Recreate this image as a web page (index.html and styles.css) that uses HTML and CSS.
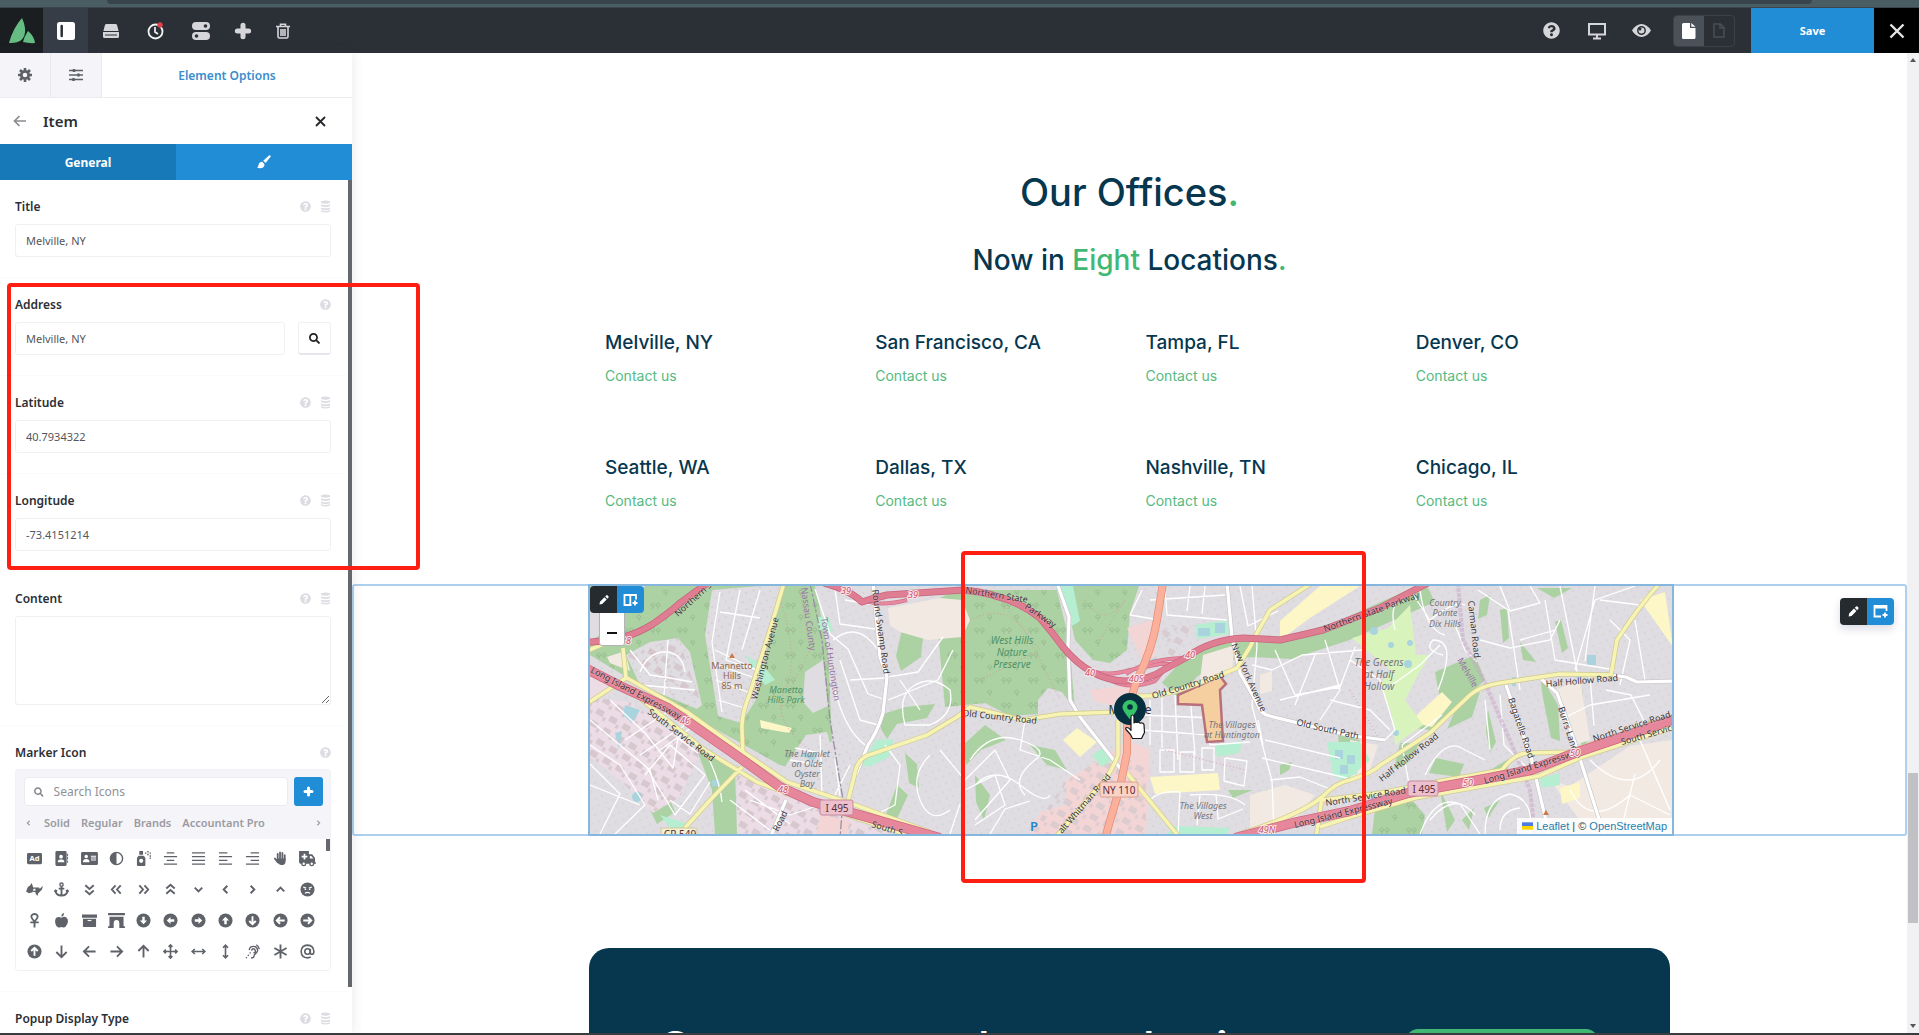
FILE: index.html
```html
<!DOCTYPE html>
<html lang="en">
<head>
<meta charset="utf-8">
<title>Live Builder – Our Offices</title>
<link rel="stylesheet" href="styles.css">
</head>
<body>
<svg class="defs" aria-hidden="true">
  <symbol id="help" viewBox="0 0 512 512"><path fill="currentColor" d="M504 256c0 136.997-111.043 248-248 248S8 392.997 8 256C8 119.083 119.043 8 256 8s248 111.083 248 248zM262.655 90c-54.497 0-89.255 22.957-116.549 63.758-3.536 5.286-2.353 12.415 2.715 16.258l34.699 26.31c5.205 3.947 12.621 3.008 16.665-2.122 17.864-22.658 30.113-35.797 57.303-35.797 20.429 0 45.698 13.148 45.698 32.958 0 14.976-12.363 22.667-32.534 33.976C247.128 238.528 216 254.941 216 296v4c0 6.627 5.373 12 12 12h56c6.627 0 12-5.373 12-12v-1.333c0-28.462 83.186-29.647 83.186-106.667 0-58.002-60.165-102-116.531-102zM256 338c-25.365 0-46 20.635-46 46 0 25.364 20.635 46 46 46s46-20.636 46-46c0-25.365-20.635-46-46-46z"/></symbol>
  <symbol id="data" viewBox="0 0 12 14"><path fill="currentColor" d="M1 1.500Q6-.8 11 1.500V3Q6 5 1 3zM1 4.500Q6 6.500 11 4.500v2Q6 8.500 1 6.500zM1 8Q6 10 11 8v2Q6 12 1 10zM1 11.200Q6 13 11 11.200v1.300Q6 14.800 1 12.500z"/></symbol>
  <symbol id="search" viewBox="0 0 512 512"><path fill="currentColor" d="M505 442.700L405.300 343c-4.500-4.500-10.600-7-17-7H372c27.600-35.300 44-79.700 44-128C416 93.100 322.900 0 208 0S0 93.100 0 208s93.100 208 208 208c48.300 0 92.700-16.400 128-44v16.300c0 6.400 2.500 12.500 7 17l99.700 99.700c9.400 9.400 24.600 9.400 33.900 0l28.300-28.300c9.400-9.400 9.400-24.600.1-34zM208 336c-70.700 0-128-57.200-128-128 0-70.700 57.200-128 128-128 70.700 0 128 57.200 128 128 0 70.700-57.200 128-128 128z"/></symbol>
  <symbol id="plus" viewBox="0 0 16 16"><path stroke="currentColor" stroke-width="4.500" stroke-linecap="round" d="M8 3v10M3 8h10"/></symbol>
  <symbol id="pen" viewBox="0 0 16 16"><path fill="currentColor" d="M2 14l.6-3.600 6-6 3 3-6 6zM9.600 3.400l1.600-1.600q.8-.6 1.600 0L14 3.200q.6.700 0 1.500l-1.500 1.700z"/></symbol>
  <symbol id="chev" viewBox="0 0 16 16"><path class="s2" d="M4 6l4 4 4-4"/></symbol>
  <symbol id="chev2" viewBox="0 0 16 16"><path class="s2" d="M3.500 3.500L8 7.500l4.500-4M3.500 9L8 13l4.500-4"/></symbol>
  <symbol id="arr" viewBox="0 0 16 16"><path class="s2" d="M8 1.500v12M2.500 8.500L8 14l5.500-5.500"/></symbol>
  <symbol id="circ" viewBox="0 0 16 16"><circle cx="8" cy="8" r="7.500" fill="currentColor"/><path class="k2" d="M8 3.500v8M4.500 8.500L8 12l3.500-3.500"/></symbol>
  <symbol id="circ2" viewBox="0 0 16 16"><circle cx="8" cy="8" r="7.500" fill="currentColor"/><path fill="#fff" d="M6.700 4h2.600v4h2.500L8 12 4.200 8h2.500z"/></symbol>
</svg>

<div class="chrome"><div class="chrome-bar"></div></div>

<header class="topbar">
  <a class="logo" href="#" aria-label="Avada"><svg width="26" height="26" viewBox="0 0 26 26"><path fill="#66bd83" d="M13 0Q4 10 0 25q7 .5 11-2 6-4 5-13-1-6-3-10zM19 13q-4 6-5 11 6 1.500 12 1-1-7-7-12z"/></svg></a>
  <button class="tool tool-on" aria-label="Toggle sidebar"><svg width="18" height="18" viewBox="0 0 18 18"><rect width="18" height="18" rx="2.500" fill="#fff"/><path stroke="#2b3036" stroke-width="2.500" stroke-linecap="round" d="M4.700 4v10"/></svg></button>
  <button class="tool" aria-label="Library"><svg width="16" height="14" viewBox="0 0 16 14"><path fill="currentColor" d="M3.500 0h9q1.200 0 1.600 1.200L15.600 7H.4l1.500-5.800Q2.300 0 3.500 0zM0 8h16v4.500q0 1.500-1.500 1.500h-13Q0 14 0 12.500z"/><path stroke="#2b3036" d="M2 11h12"/></svg></button>
  <button class="tool" aria-label="History"><svg width="18" height="18" viewBox="0 0 18 18"><circle cx="8.500" cy="9.500" r="7" fill="none" stroke="#f3f3f4" stroke-width="1.800"/><path fill="none" stroke="#f3f3f4" stroke-width="1.700" d="M8 5v5l3 2"/><circle cx="13" cy="3" r="2.700" fill="#e2414a"/></svg></button>
  <button class="tool" aria-label="Preferences"><svg width="18" height="18" viewBox="0 0 18 18"><rect width="18" height="8" rx="4" fill="currentColor"/><rect y="10" width="18" height="8" rx="4" fill="currentColor"/><circle cx="13.500" cy="4" r="1.800" fill="#2b3036"/><circle cx="4.500" cy="14" r="1.800" fill="#2b3036"/></svg></button>
  <button class="tool" aria-label="Add"><svg width="18" height="18"><use href="#plus"/></svg></button>
  <button class="tool" aria-label="Delete"><svg width="14" height="16" viewBox="0 0 14 16"><path fill="none" stroke="currentColor" stroke-width="1.600" d="M0 3.500h14M4.500 3V1.200h5V3M2 4v9.500Q2 15 3.500 15h7q1.500 0 1.500-1.500V4M5 6v7M7 6v7M9 6v7"/></svg></button>
  <div class="spacer"></div>
  <button class="tool" aria-label="Help"><svg width="17" height="17"><use href="#help"/></svg></button>
  <button class="tool" aria-label="Responsive"><svg width="20" height="18" viewBox="0 0 20 18"><path fill="none" stroke="currentColor" stroke-width="2" d="M2 2h16v10.500H2zM6 16.500h8M10 13v3"/></svg></button>
  <button class="tool" aria-label="Preview"><svg width="19" height="13" viewBox="0 0 19 13"><path fill="currentColor" d="M0 6.500Q4 0 9.500 0T19 6.500Q15 13 9.500 13T0 6.500z"/><circle cx="9.500" cy="6.500" r="3.700" fill="none" stroke="#2b3036" stroke-width="1.500"/><circle cx="8" cy="5" r="1.500" fill="#2b3036"/></svg></button>
  <div class="pages">
    <button class="page page-on" aria-label="Published"><svg width="14" height="16" viewBox="0 0 14 16"><path fill="#fff" d="M1.500 0H8v5h5.500v9.500q0 1.500-1.500 1.500H1.500Q0 16 0 14.500v-13Q0 0 1.500 0zM9.300 0l4.200 3.700H9.300z"/></svg></button>
    <button class="page" aria-label="Draft"><svg width="12" height="15" viewBox="0 0 12 15"><path fill="none" stroke="#484e56" stroke-width="1.500" d="M1 1h6.500L11 4.500V14H1zM7 1v4h4"/></svg></button>
  </div>
  <button class="save">Save</button>
  <button class="exit" aria-label="Close"><svg width="16" height="16" viewBox="0 0 16 16"><path stroke="#e6e6e8" stroke-width="2.400" d="M1.500 1.500l13 13M14.500 1.500l-13 13"/></svg></button>
</header>

<div class="workspace">
  <aside class="sidebar">
    <nav class="tabs">
      <button class="tab" aria-label="Settings"><svg width="14" height="14" viewBox="0 0 14 14"><circle cx="7" cy="7" r="3.700" fill="none" stroke="currentColor" stroke-width="2.800"/><path stroke="currentColor" stroke-width="2.600" d="M7 0v2.500M7 11.500V14M0 7h2.500M11.500 7H14M2 2l2 2M10 10l2 2M2 12l2-2M10 4l2-2"/></svg></button>
      <button class="tab" aria-label="Navigator"><svg width="14" height="12" viewBox="0 0 14 12"><path fill="none" stroke="currentColor" stroke-width="1.500" d="M0 1.500h14M0 6h14M0 10.500h14"/><path stroke="currentColor" stroke-width="2.500" d="M5 0v3M9.500 4.500v3M4.500 9v3"/></svg></button>
      <button class="tab tab-main">Element Options</button>
    </nav>
    <div class="head">
      <button class="plain" aria-label="Back"><svg width="13" height="12" viewBox="0 0 13 12"><path fill="none" stroke="#8b8b90" stroke-width="1.700" d="M13 6H1.500M6.500 1l-5 5 5 5"/></svg></button>
      <h1>Item</h1>
      <button class="plain" aria-label="Close panel"><svg width="11" height="11" viewBox="0 0 11 11"><path stroke="#25282c" stroke-width="1.800" d="M1 1l9 9M10 1l-9 9"/></svg></button>
    </div>
    <div class="modes">
      <button class="mode mode-on">General</button>
      <button class="mode" aria-label="Design"><svg width="14" height="14" viewBox="0 0 14 14"><path fill="#fff" d="M12 .4q1.300-.6 1.700.5.100.6-.3 1.100L8.600 8 6.200 5.700zM5.200 6.800l2.200 2.200q.3 4.300-4.400 4.300Q1 13.300 0 12.300q1.400-.5 1.600-2.500.3-2.600 3.600-3z"/></svg></button>
    </div>
    <div class="fields-wrap">
      <div class="fields">
        <section class="field"><div class="label"><label for="title">Title</label><svg class="i-help"><use href="#help"/></svg><svg class="i-data"><use href="#data"/></svg></div><input id="title" type="text" value="Melville, NY"></section>
        <section class="field"><div class="label"><label for="address">Address</label><svg class="i-help"><use href="#help"/></svg></div><div class="combo"><input id="address" type="text" value="Melville, NY"><button class="find" aria-label="Find address"><svg width="11" height="11"><use href="#search"/></svg></button></div></section>
        <section class="field"><div class="label"><label for="lat">Latitude</label><svg class="i-help"><use href="#help"/></svg><svg class="i-data"><use href="#data"/></svg></div><input id="lat" type="text" value="40.7934322"></section>
        <section class="field"><div class="label"><label for="lng">Longitude</label><svg class="i-help"><use href="#help"/></svg><svg class="i-data"><use href="#data"/></svg></div><input id="lng" type="text" value="-73.4151214"></section>
        <section class="field"><div class="label"><label for="content">Content</label><svg class="i-help"><use href="#help"/></svg><svg class="i-data"><use href="#data"/></svg></div><textarea id="content"></textarea></section>
        <section class="field">
          <div class="label"><label for="icons">Marker Icon</label><svg class="i-help"><use href="#help"/></svg></div>
          <div class="picker">
            <div class="picker-head">
              <div class="picker-row">
                <div class="searchbox"><svg width="10" height="10"><use href="#search"/></svg><input id="icons" type="text" placeholder="Search Icons"></div>
                <button class="add" aria-label="Add icon"><svg width="11" height="11"><use href="#plus"/></svg></button>
              </div>
              <div class="sets">
                <button class="plain" aria-label="Previous"><svg class="r90" width="14" height="14"><use href="#chev"/></svg></button>
                <button class="set">Solid</button><button class="set">Regular</button><button class="set">Brands</button><button class="set">Accountant Pro</button>
                <button class="plain last" aria-label="Next"><svg class="r270" width="14" height="14"><use href="#chev"/></svg></button>
              </div>
            </div>
            <div class="icons">
              <svg viewBox="0 0 16 16"><rect y="2" width="16" height="12" rx="1.500" fill="currentColor"/><text class="ad" x="8" y="11">Ad</text></svg>
              <svg viewBox="0 0 16 16"><path fill="currentColor" d="M3 0h9q1.500 0 1.500 1.500v13Q13.500 16 12 16H3q-1.500 0-1.500-1.500v-13Q1.500 0 3 0zM14 3h1v2.500h-1zM14 6.500h1V9h-1zM14 10h1v2.500h-1z"/><path fill="#fff" d="M7.500 4a2 2 0 0 1 0 4 2 2 0 0 1 0-4zM4 12q0-3 2.500-3h2Q11 9 11 12z"/></svg>
              <svg viewBox="0 0 16 16"><rect x="-1" y="1" width="18" height="14" rx="1.500" fill="currentColor"/><path fill="#fff" d="M4.500 4a1.900 1.900 0 0 1 0 3.800 1.900 1.900 0 0 1 0-3.800zM1 12q0-3.500 3.500-3.500T8 12zM9.500 5H15v1H9.500zM9.500 7H15v1H9.500zM9.500 9H15v1H9.500z"/></svg>
              <svg viewBox="0 0 16 16"><circle cx="8" cy="8" r="6.500" fill="none" stroke="currentColor" stroke-width="1.500"/><path fill="currentColor" d="M8 1.500v13a6.500 6.500 0 0 1 0-13z"/></svg>
              <svg viewBox="0 0 16 16"><path fill="currentColor" d="M3.500 0h4v4h-4zM3 5h5q2 1 2 3v7q0 1-1 1H2q-1 0-1-1V8q0-2 2-3zM9.500 1.500H11V3H9.500zM12 0h1.500v1.500H12zM14.500 1.500H16V3h-1.500zM12 3h1.500v1.500H12zM14.500 4.500H16V6h-1.500zM14.500 7H16v1.300h-1.500z"/><circle cx="5.500" cy="10.500" r="2.200" fill="#fff"/></svg>
              <svg viewBox="0 0 16 16"><path class="s15" d="M4 2h8M1 6h14M4 10h8M1 14h14"/></svg>
              <svg viewBox="0 0 16 16"><path class="s15" d="M1 2h14M1 6h14M1 10h14M1 14h14"/></svg>
              <svg viewBox="0 0 16 16"><path class="s15" d="M1 2h9M1 6h14M1 10h9M1 14h14"/></svg>
              <svg viewBox="0 0 16 16"><path class="s15" d="M6 2h9M1 6h14M6 10h9M1 14h14"/></svg>
              <svg viewBox="0 0 16 16"><path stroke="currentColor" stroke-width="1.900" stroke-linecap="round" d="M5 9V3M7.500 8V1.500M10 8V2M12.500 9V4.500M2 8l3 4"/><path fill="currentColor" d="M4 8h9.500v2q0 5-4.500 5-3 0-5-4z"/></svg>
              <svg viewBox="0 0 16 16"><path fill="currentColor" d="M-1 0h10.500v3.500H13l3 4V12h1v1.500H0L-1 12z"/><circle cx="4" cy="13.500" r="2" fill="#fff" stroke="currentColor" stroke-width="1.400"/><circle cx="12.500" cy="13.500" r="2" fill="#fff" stroke="currentColor" stroke-width="1.400"/><path stroke="#fff" stroke-width="1.800" d="M4.800 3v6M1.800 6h6"/><path fill="#fff" d="M10.500 5.300h1.500L14.300 8h-3.800z"/></svg>

              <svg viewBox="0 0 16 16"><path fill="currentColor" d="M-1 10l2-5 2-1 2-3 2 6-1 4-4 1zM9 6l5 1 3-3-1 4-4 4-1 3-2-3z"/><path fill="none" stroke="currentColor" stroke-width="1.500" d="M6 6.500h7M6.500 10h7"/></svg>
              <svg viewBox="0 0 16 16"><path class="s2" d="M8 5v9.500M5 7h6M1.500 9q.5 5.500 6.500 5.500T14.500 9M.5 10.500L1.700 9l1.600 1M15.500 10.500L14.300 9l-1.600 1"/><circle cx="8" cy="2.800" r="1.700" class="s15"/></svg>
              <svg viewBox="0 0 16 16"><use href="#chev2"/></svg>
              <svg class="r90" viewBox="0 0 16 16"><use href="#chev2"/></svg>
              <svg class="r270" viewBox="0 0 16 16"><use href="#chev2"/></svg>
              <svg class="r180" viewBox="0 0 16 16"><use href="#chev2"/></svg>
              <svg viewBox="0 0 16 16"><use href="#chev"/></svg>
              <svg class="r90" viewBox="0 0 16 16"><use href="#chev"/></svg>
              <svg class="r270" viewBox="0 0 16 16"><use href="#chev"/></svg>
              <svg class="r180" viewBox="0 0 16 16"><use href="#chev"/></svg>
              <svg viewBox="0 0 16 16"><circle cx="8" cy="8" r="7.500" fill="currentColor"/><path fill="none" stroke="#fff" stroke-width="1.300" d="M3.500 5.500l3 1M12.500 5.500l-3 1M5.300 12q2.700-2 5.400 0M5 8h1.500M9.500 8H11"/></svg>

              <svg viewBox="0 0 16 16"><path class="s2" d="M8 8v7.500M3.500 10h9M8 9Q3.500 4.500 5 2.500 6 1 8 1t3 1.500Q12.500 4.500 8 9z"/></svg>
              <svg viewBox="0 0 16 16"><path fill="currentColor" d="M8 5q3-2 5.500 0Q16 8 14 12t-4 3.500q-2-1-4 0Q3 16 1.500 11.500.5 7 2.500 5 5 3.500 8 5zM8 4Q7.500 1 10.500 0 11 3.500 8 4z"/></svg>
              <svg viewBox="0 0 16 16"><path fill="currentColor" d="M0 1.500h16V5H0zM1 6h14v8q0 1-1 1H2q-1 0-1-1z"/><path stroke="#fff" stroke-width="1.200" d="M6 8h4"/></svg>
              <svg viewBox="0 0 16 16"><path fill="currentColor" d="M-1 0h18v2.500H-1zM.5 4h15v10H17v2h-6v-5q0-3.500-3-3.500T5 11v5h-6v-2H.5z"/></svg>
              <svg viewBox="0 0 16 16"><use href="#circ2"/></svg>
              <svg class="r90" viewBox="0 0 16 16"><use href="#circ2"/></svg>
              <svg class="r270" viewBox="0 0 16 16"><use href="#circ2"/></svg>
              <svg class="r180" viewBox="0 0 16 16"><use href="#circ2"/></svg>
              <svg viewBox="0 0 16 16"><use href="#circ"/></svg>
              <svg class="r90" viewBox="0 0 16 16"><use href="#circ"/></svg>
              <svg class="r270" viewBox="0 0 16 16"><use href="#circ"/></svg>

              <svg class="r180" viewBox="0 0 16 16"><use href="#circ"/></svg>
              <svg viewBox="0 0 16 16"><use href="#arr"/></svg>
              <svg class="r90" viewBox="0 0 16 16"><use href="#arr"/></svg>
              <svg class="r270" viewBox="0 0 16 16"><use href="#arr"/></svg>
              <svg class="r180" viewBox="0 0 16 16"><use href="#arr"/></svg>
              <svg viewBox="0 0 16 16"><path class="s17" d="M8 1.500v13M1.500 8h13M6 3l2-2 2 2M6 13l2 2 2-2M3 6L1 8l2 2M13 6l2 2-2 2"/></svg>
              <svg viewBox="0 0 16 16"><path class="s17" d="M1.500 8h13M4 5.300L1.200 8 4 10.700M12 5.300L14.800 8 12 10.700"/></svg>
              <svg viewBox="0 0 16 16"><path class="s17" d="M8 1.500v13M5.300 4L8 1.200 10.700 4M5.300 12L8 14.800l2.700-2.800"/></svg>
              <svg viewBox="0 0 16 16"><path class="s15" d="M4.500 6.500Q5 2.500 9 2.500t4.500 4q0 2-2 3.500T9.500 13t-3 2M7 7q.5-2 2-2t2 2-2 2.500M1 15l1-1M3 12.500l1-1M5 10l1-1M12 .8q3 1.700 3.300 4.700"/></svg>
              <svg viewBox="0 0 16 16"><path class="s2" d="M8 .5v15M1.500 4.300l13 7.400M14.500 4.300l-13 7.400"/></svg>
              <svg viewBox="0 0 16 16"><path class="s17" d="M11 5v4q0 2 1.800 2Q14.800 11 14.800 8 14.500 1.500 8 1.200 1.500 1.500 1.200 8q.3 6.500 6.800 6.800 2 0 3.500-1"/><circle class="s17" cx="8" cy="8" r="2.900"/></svg>
            </div>
            <div class="picker-thumb"></div>
          </div>
        </section>
        <section class="field"><div class="label"><span class="label-text">Popup Display Type</span><svg class="i-help"><use href="#help"/></svg><svg class="i-data"><use href="#data"/></svg></div></section>
      </div>
      <div class="side-thumb"></div>
    </div>
  </aside>

  <main class="canvas">
    <section class="offices">
      <h2>Our Offices<b>.</b></h2>
      <h3>Now in <b>Eight</b> Locations<b>.</b></h3>
      <div class="grid">
        <div class="office"><h4>Melville, NY</h4><a href="#">Contact us</a></div>
        <div class="office"><h4>San Francisco, CA</h4><a href="#">Contact us</a></div>
        <div class="office"><h4>Tampa, FL</h4><a href="#">Contact us</a></div>
        <div class="office"><h4>Denver, CO</h4><a href="#">Contact us</a></div>
        <div class="office"><h4>Seattle, WA</h4><a href="#">Contact us</a></div>
        <div class="office"><h4>Dallas, TX</h4><a href="#">Contact us</a></div>
        <div class="office"><h4>Nashville, TN</h4><a href="#">Contact us</a></div>
        <div class="office"><h4>Chicago, IL</h4><a href="#">Contact us</a></div>
      </div>
    </section>

    <section class="map-row">
      <div class="row-tools"><button class="rt" aria-label="Edit container"><svg width="13" height="13"><use href="#pen"/></svg></button><button class="rt rt-blue" aria-label="Add container"><svg width="15" height="15" viewBox="0 0 15 15"><path fill="none" stroke="#fff" stroke-width="1.800" d="M8 12.500H1.500V2h12v5M1.500 3.500h12M12 8.500v5M9.500 11h5"/></svg></button></div>
      <div class="map">
        <svg class="tiles" viewBox="590 586 1082 248" preserveAspectRatio="xMidYMid slice">
          <defs>
            <pattern id="houses" width="11" height="10" patternUnits="userSpaceOnUse" patternTransform="rotate(20)"><rect x="1" y="1" width="2" height="2" fill="#cbc8cb"/><rect x="7" y="6" width="2" height="2" fill="#d0cccf"/></pattern>
            <pattern id="trees" width="27" height="25" patternUnits="userSpaceOnUse"><path fill="none" stroke="#93b98b" stroke-width=".8" d="M5 9V6M3 6a2 2 0 1 1 3.500 0zM10 9V6M8.500 6a2 2 0 1 1 3.500 0zM18 21v-3M16 18a2 2 0 1 1 3.500 0z"/></pattern>
            <pattern id="plants" width="15" height="13" patternUnits="userSpaceOnUse" patternTransform="rotate(30)"><rect x="2" y="2" width="8" height="6" fill="#d6c8cd"/><rect x="11" y="7" width="3" height="4" fill="#d8cbd0"/></pattern>
            <g id="lie"><path d="M585 668L620 686 668 708 740 758 780 787 813 802 863 816 940 838M1235 838L1293 823 1350 811 1408 793 1484 779 1531 770 1575 753 1675 719"/></g>
            <g id="nsp"><path d="M585 642Q625 642 653 624 673 610 680 603L709 582M824 583Q850 590 862 602 874 598 887 595L963 590Q1010 594 1040 618 1052 632 1063 647 1090 680 1125 681 1150 680 1165 669L1187 657Q1210 640 1243 638L1280 640 1323 630 1380 608 1428 583"/></g>
            <g id="ramps"><path d="M862 600Q880 607 907 600M1083 668Q1105 678 1130 670L1160 664 1172 664M1112 681Q1130 690 1155 681L1168 665M1126 674Q1150 658 1187 658"/></g>
            <g id="yellow"><path d="M623 648L626 678 585 705M585 652L603 644M630 690L703 749 757 782 820 806 905 834M627 678L687 712 743 752 787 782 847 802 930 832M742 767L713 797 683 830 678 838M784 583L770 630 750 693Q741 715 742 730L743 757M847 805L855 773Q858 757 872 754L927 735 957 717 970 707 1023 720 1060 714 1117 712M1137 696Q1160 697 1180 690L1213 678 1237 668 1250 647 1257 633 1270 610 1312 583M1118 720L1118 755Q1110 777 1093 793L1055 838M1127 773L1180 838M1240 834Q1300 815 1322 797 1337 782 1350 780 1374 772 1379 766L1430 733 1470 695Q1480 686 1500 683L1560 674 1611 675 1617 640Q1640 605 1660 583M1322 797L1316 838M1322 800L1380 793 1441 781 1502 770Q1515 752 1531 753L1568 752 1675 716M1320 827L1350 817 1415 798 1539 776 1582 757 1675 727"/></g>
            <g id="white"><path d="M873 583L880 657 887 677 883 713Q877 733 868 745L856 775M1057 583L1069 617 1068 647 1070 700 1080 717 1127 777M1227 583L1232 637 1240 673 1257 703Q1260 714 1270 716L1347 735 1385 740M1611 675L1626 677 1637 682 1675 681M1539 677L1557 693 1575 743 1605 838M786 800L770 838M1506 685L1531 757 1550 838"/></g>
          </defs>
          <rect x="590" y="586" width="1082" height="248" fill="#dfdde1"/>
          <rect x="590" y="586" width="1082" height="248" fill="url(#houses)" opacity=".4"/>
          <!-- woods and parks -->
          <g fill="#acd1a2">
            <path d="M590 586H815L828 650 832 740 807 772 780 765 690 715 590 655z"/>
            <path d="M935 600L957 590H1057L1069 640 1075 710 1062 692 1048 688 1038 700V714L1010 716 985 703 945 707zM1062 583H1140L1130 613 1127 650 1110 663 1093 660 1075 640zM695 745L735 770 737 834H715L712 790zM1375 810L1410 798 1425 815 1422 834H1372zM1435 672L1475 655 1485 680 1430 730 1415 728 1440 700zM1400 743h20l-14 22-12 4zM1460 700l20-8-8 25-25 12zM1488 710l8 32-6 10-4-20zM1436 758l28 6-5 13-30-4zM1280 765l12-3-3 8-9 5zM1265 790h15l-8 12zM1338 735l22 5-10 20-8 22z"/>
            <path d="M903 625l20 12-2 20-20 14-5-15zM880 715l25-8 30-3-8 14-30 6-10 15-6-10zM905 753l4 30 10 5-2-24zM897 785l-15 40h12l14-30zM645 800l22-8 8 20-18 12zM985 725l-22 20 3 20 15-15 25-10zM1030 745l25 5 12 20-20-5zM975 775l15 20-6 25-8-18zM1480 600l10-5-3 20-9 4zM1500 610l7-2 2 30-6 5zM1555 622l6-2 7 28-6 5zM1520 642l10 12 6 8-13-2zM1537 588h35l-18 10zM1540 675l18 30 2 36-9-3-8-40zM1582 688l5 60-6 2zM1648 720l8 4-2 10-8-6zM1515 755l-8 14-40 22 5-10zM1440 790l15 30-8 12zM1462 820l12-12-5 22zM1500 800l-12 18-4-10zM1660 755l10 15-6 6zM1228 790h25l-20 8z"/>
          </g>
          <path fill="none" stroke="#acd1a2" stroke-width="22" d="M1170 690L1190 668Q1220 648 1250 646L1290 648 1345 630 1430 592"/>
          <g fill="url(#trees)"><path d="M590 586H815L828 650 832 740 807 772 780 765 690 715 590 655zM935 600L957 590H1057L1069 640 1075 710 1062 692 1048 688 1038 700V714L1010 716 985 703 945 707zM1062 583H1140L1127 650 1110 663 1093 660zM1375 810L1410 798 1425 815 1422 834H1372z"/></g>
          <!-- residential blocks -->
          <g fill="#dfdde1"><path d="M712 590L783 584 768 645 756 700 741 723 718 716 705 635zM590 600l25-14h30l-30 40-25 15zM626 655L650 642 678 638 690 652 702 705 697 709 640 685zM805 672L823 660 828 706 813 713 803 702zM786 765L806 735 827 732 834 757H853L847 792 815 796 787 775z"/><path fill="url(#houses)" opacity=".6" d="M712 590L783 584 768 645 756 700 741 723 718 716 705 635zM626 655L678 638 690 652 702 705 697 709 640 685zM786 765L827 732 853 757 847 792 815 796z"/></g>
          <!-- commercial and industrial land -->
          <g fill="#ebdce6"><path d="M590 697L630 702 700 752 680 797 653 813 623 783 590 757zM737 775L820 808 890 834H737zM590 665l30 18-10 10-20 6z"/></g>
          <path fill="url(#plants)" d="M590 697L630 702 700 752 680 797 653 813 623 783 590 757zM737 775L820 808 890 834H737zM626 655L678 638 700 700z"/>
          <g fill="#f4d5d5"><path d="M1066 780L1105 757 1128 740 1150 750 1146 834H1030L1040 812 1065 805zM1127 628l30-10-3 50-12-8zM1090 690l40-5-5 22-30-5zM820 815l30 5-3 14h-30z"/></g>
          <path fill="url(#plants)" d="M1066 780L1105 757 1146 760V834H1030zM1160 625h35l-25 35z" opacity=".8"/>
          <g fill="#f2eae2"><path d="M888 608L940 598 962 600 970 620 962 637 928 640 900 632 890 625zM1203 655L1235 645 1232 670 1200 680zM1250 795l35-10 30 10-20 25-45 15zM1260 675l12-4v20l-12 3zM1350 740l28 5-10 30-18 4zM1555 690l25-10 10 60-15 5-12-35zM1550 780l20 6 60-40 42-6V834H1590zM607 657l18-6 5 20-20-8z"/></g>
          <g fill="#fdf6c6"><path d="M1077 728L1097 742 1080 757 1063 740zM1150 777L1218 773 1220 790 1155 794zM1420 712l22-20 10 10-20 25-22-5zM1280 640l30-22 50-32h-40l-40 35zM1560 788l20-6v16l-18 6zM760 720l32 8-3 5-28-5zM1640 600l25-8 8 55z"/></g>
          <path fill="#d9f3bd" d="M1352 638L1388 628 1410 605 1416 655 1430 655 1418 675 1405 700 1423 725 1395 745 1392 715 1380 685 1390 670z"/>
          <path fill="#b5eed0" d="M1195 625L1228 620 1229 634 1197 639zM817 617h12l4 15-14-2zM745 655l18 10 12 15-10 5zM1327 742L1360 742 1370 760 1345 782 1333 775zM1092 755l12 -8 10 12-12 8zM860 765l16-25 18-1-5 18-20 10zM660 815l25 8v11h-10zM1215 745l28-4-4 12-22 4zM1055 586h18l7 35-8 5zM1175 826l55 2-3 6h-60zM1540 778l20-5v12l-19 3zM1350 742l10 10-3 22-8 2z"/>
          <g fill="#a9d4de"><path d="M1198 628h12v8h-12zM1215 623h10v10h-10zM1335 750h8v9h-8zM1347 755h8v9h-8zM1340 765h8v9h-8zM1587 655h9v10h-9zM1512 677h4v9h-4zM712 780h8v6h-8zM625 705l15 5-8 13-9-8zM615 733l7-2-3 18zM800 755l18-3-4 9zM1150 665a5 5 0 1 1 8 2z"/><circle cx="1374" cy="631" r="4"/><circle cx="1391" cy="645" r="3"/><circle cx="1410" cy="643" r="3"/><circle cx="1408" cy="664" r="4"/><circle cx="1396" cy="733" r="3"/><circle cx="637" cy="797" r="5"/></g>
          <!-- minor streets -->
          <g class="minor">
            <path d="M720 592l-8 50 10 70M740 590l-14 70 30 10M760 590l-18 60M720 612l40 6M715 650l42 20M718 665l34 12M716 680l32 12M718 700l26 8M630 650l20 25 20 3 22 4M640 672q8-20 25-20t20 20M640 685l55 5M668 640l-4 55M590 720l60 50 8 30M610 700l35 33 28 35 5-30 20 15M625 740l45-30M640 755l45-30M590 745l30 20 25 40-30 29M600 834l20-40-30-30M645 765l30 50 30-40-35-30-25 30M590 785l50 20M660 750l35-25M708 757q12 25 14 45M670 800l20 14 20-32"/>
            <path d="M815 589l15 45 18 15 20 45 15 5M835 589l5 35 35 5M845 600l30 5M833 640q25-20 45 10M840 660l20 60 18 5M835 690q10 40 30 55M850 680l35-2M888 677l30-5 25-35M888 700l50-20 15-30M905 725q-8-30 10-40t35 5q5 25-20 35zM900 680l20 30M885 745l15 20-5 40-20 10M930 755q-20 20-10 45t30 10M940 750l25 30 30-30 15 30-35 40M950 834l10-30M745 790l45 34M750 800l40 15 45-15M790 760l30 5M795 748l25 5M820 735l2 60M835 758l5 38M850 765l-15 30M730 800l45 34"/>
            <path d="M1142 590l-12 25 30 5M1150 600l75-5M1165 590l2 25 60 5M1190 586l-3 25M1205 586l-3 28M1240 586l8 40 30-15M1140 715l75 3M1150 700v45M1162 698v50M1175 695l3 65M1190 695l5 60M1205 715l5 30 40-3M1140 730l70 5M1160 750h14v22h-14zM1180 752h14v20h-14zM1202 748h12v22h-12zM1225 758l22 3-3 25-20-5zM1150 800q10-10 30-8l-2 42M1190 795q40-3 55 10M1200 795l-3 30M1216 794l2 25 25-10M1252 586l5 60-5 60 20 75 2 50M1265 740l75 18M1262 758l85 20M1258 720l5 25M1270 780l30-3 30 12M1252 665l20 5 30-15 60-5M1275 650l20 45 45-8 15-40M1280 700l60-15M1295 705l20-50M1325 640l15 50-20 30M1350 660l30 20 15 50-10 10M1330 700l40 10 20 20"/>
            <path d="M970 760q20-30 50-20t15 20q-25 20-10 35M975 785q20-20 45 0t30 10M1025 720l-5 30 30 10 30 20M965 790l30-15 10 30-30 20M990 834l15-25 25-8"/>
            <path d="M1395 630q-8-30 15-40l20 30q25-20 35-15M1420 590q5 40 25 45M1443 655q-20-5-10-15 25 0 5 50M1455 625l10 25 12 12M1385 690l35-25 20-20M1480 640l30 8 40-8 10-20M1478 590l30 20 12 80M1500 586l10 25 30-8-10-17M1545 600l10 60 60 10M1520 640l35-10M1560 586l18 90M1575 670l20-70 40-14M1595 586l-10 75M1600 600l40 5M1610 620l20 20-10 45M1635 620l10 60M1560 720l30-15 60-10M1590 676l4 50M1606 690l25 5 15 30M1485 700l5 50M1500 695l4 50 30 30M1410 790l-8-45 40-30M1425 775q20-40 40-25l20 10M1420 834q15-40 40-30l20 30M1430 820q25-30 45-5M1485 834q0-35 25-40 25 5 20 40M1500 830q0-20 20-22M1570 790q20 40 60 5l40 20M1590 760q40 40 70 0M1620 834l15-60M1640 740l30 70"/>
          </g>
          <path fill="none" stroke="#dc8c9c" stroke-width=".8" stroke-dasharray="1 2.500" d="M780 600q20 60 5 90t25 60M800 590l10 60-30 60M970 620q40-20 60 20t30 60M1000 600l40 50-60 30M1085 600q20 30 40 0M1100 640l25-40M650 650l30 60M1165 750l80 20M1350 690l30 50"/>
          <!-- villages boundary -->
          <path fill="#f6cfa0" stroke="#b8707c" stroke-width="2.500" d="M1178 695L1220 676 1226 684 1220 690 1223 741 1207 742 1202 705 1178 704z"/>
          <path fill="none" stroke="#9c8da2" stroke-width="1.300" stroke-dasharray="9 2 3 2" d="M810 583L822 640 830 720 843 800 840 838"/>
          <path fill="none" stroke="#c9a8cc" stroke-width="4" stroke-dasharray="4 1" opacity=".55" d="M1458 583L1463 640 1485 683 1512 745 1530 790 1535 834"/>
          <!-- main roads: casing then fill -->
          <use href="#white" class="case" stroke-width="4.500" stroke="#c9c6c9"/><use href="#white" class="case" stroke-width="3.200" stroke="#fff"/>
          <use href="#yellow" class="case" stroke-width="5" stroke="#cfc98f"/><use href="#yellow" class="case" stroke-width="3.600" stroke="#f6f3b3"/>
          <use href="#ramps" class="case" stroke-width="4" stroke="#d4708a"/><use href="#ramps" class="case" stroke-width="2.500" stroke="#e68a9f"/>
          <use href="#nsp" class="case" stroke-width="7" stroke="#c8647d"/><use href="#nsp" class="case" stroke-width="5.500" stroke="#df7d93"/>
          <use href="#lie" class="case" stroke-width="10" stroke="#cf6880"/><use href="#lie" class="case" stroke-width="8.500" stroke="#e6879b"/>
          <g class="case"><path stroke="#e38d78" stroke-width="8" d="M1163 583L1157 620Q1152 650 1137 680L1127 710 1127 753 1120 787 1105 838"/><path stroke="#fbb09c" stroke-width="6.500" d="M1163 583L1157 620Q1152 650 1137 680L1127 710 1127 753 1120 787 1105 838"/></g>
          <!-- road names -->
          <g class="rd">
            <text transform="translate(678 617) rotate(-42)">Northern Sta</text>
            <text transform="translate(590 672) rotate(28)">Long Island Expressway</text>
            <text transform="translate(647 713) rotate(37)">South Service Road</text>
            <text transform="translate(757 700) rotate(-75)">Washington Avenue</text>
            <text transform="translate(872 590) rotate(82)">Round Swamp Road</text>
            <text transform="translate(965 593) rotate(9)">Northern State</text>
            <text transform="translate(1024 608) rotate(34)">Parkway</text>
            <text transform="translate(962 716) rotate(6)">Old Country Road</text>
            <text transform="translate(1153 699) rotate(-17)">Old Country Road</text>
            <text transform="translate(1231 645) rotate(66)">New York Avenue</text>
            <text transform="translate(1296 725) rotate(13)">Old South Path</text>
            <text transform="translate(1325 632) rotate(-20)">Northern State Parkway</text>
            <text transform="translate(1062 834) rotate(-49)">alt Whitman Road</text>
            <text transform="translate(1326 806) rotate(-9)">North Service Road</text>
            <text transform="translate(1295 828) rotate(-14)">Long Island Expressway</text>
            <text transform="translate(1382 782) rotate(-38)">Half Hollow Road</text>
            <text transform="translate(1546 687) rotate(-5)">Half Hollow Road</text>
            <text transform="translate(1468 601) rotate(84)">Carman Road</text>
            <text transform="translate(1508 699) rotate(71)">Bagatelle Road</text>
            <text transform="translate(1558 708) rotate(72)">Burrs Lane</text>
            <text transform="translate(1594 742) rotate(-18)">North Service Road</text>
            <text transform="translate(1622 745) rotate(-16)">South Service</text>
            <text transform="translate(1485 784) rotate(-17)">Long Island Expressway</text>
            <text transform="translate(871 827) rotate(16)">South S</text>
            <text transform="translate(778 832) rotate(-63)">Road</text>
          </g>
          <g class="ex"><text x="626" y="644">38</text><text x="685" y="724">46</text><text x="783" y="793">48</text><text x="846" y="594">39</text><text x="913" y="598">39</text><text x="1090" y="676">40</text><text x="1136" y="682">40S</text><text x="1190" y="658">40</text><text x="1267" y="833">49N</text><text x="1468" y="786">50</text><text x="1575" y="756">50</text></g>
          <g class="purple"><text transform="translate(801 588) rotate(82)">Nassau County</text><text transform="translate(821 618) rotate(81)">Town of Huntington</text><text transform="translate(1457 660) rotate(60)">Melville</text></g>
          <g class="brown"><path d="M729 658l3-5 3 5zM1543 815l3-5 3 5z" fill="#cf7a46"/><text x="732" y="669">Mannetto</text><text x="732" y="679">Hills</text><text x="732" y="689">85 m</text></g>
          <g class="park"><text x="786" y="693">Manetto</text><text x="786" y="703">Hills Park</text></g>
          <g class="park big"><text x="1012" y="644">West Hills</text><text x="1012" y="656">Nature</text><text x="1012" y="668">Preserve</text></g>
          <g class="hood"><text x="807" y="757">The Hamlet</text><text x="807" y="767">on Olde</text><text x="807" y="777">Oyster</text><text x="807" y="787">Bay</text><text x="1232" y="728">The Villages</text><text x="1232" y="738">at Huntington</text><text x="1203" y="809">The Villages</text><text x="1203" y="819">West</text><text x="1445" y="606">Country</text><text x="1445" y="616">Pointe</text><text x="1445" y="627">Dix Hills</text></g>
          <g class="hood big"><text x="1379" y="666">The Greens</text><text x="1379" y="678">at Half</text><text x="1379" y="690">Hollow</text></g>
          <g class="shield"><rect x="820" y="800" width="33" height="15" rx="2"/><text x="837" y="812">I 495</text><rect x="1408" y="781" width="30" height="15" rx="2"/><text x="1424" y="793">I 495</text><rect class="orange" x="1100" y="782" width="38" height="15" rx="2"/><text x="1119" y="794">NY 110</text><rect class="sand" x="661" y="828" width="36" height="15" rx="2"/><text x="680" y="838">CR 549</text></g>
          <text class="parking" x="1030" y="831">P</text>
          <text class="town" x="1130" y="714">Melville</text>
          <!-- marker and pointer -->
          <circle cx="1130" cy="709" r="16" fill="#06303f"/>
          <path fill="#35c269" d="M1130 700a7.500 7.500 0 0 1 7.500 7.500q0 3-7.500 12-7.500-9-7.500-12a7.500 7.500 0 0 1 7.500-7.500z"/><circle cx="1130" cy="707" r="2.800" fill="#06303f"/>
          <path fill="#fff" stroke="#16181a" stroke-width="1.200" stroke-linejoin="round" d="M1131 717q0-2 1.500-2t1.500 2v6q1-1.500 3-.5 1.500-.8 3 .6 3-.8 4 1.400l.5 8-3 6h-9l-2-4-4.500-5q-1-2 1-2t4 3z"/>
        </svg>
        <button class="zoom-out" aria-label="Zoom out"></button>
        <div class="map-tools"><button class="rt" aria-label="Edit column"><svg width="12" height="12"><use href="#pen"/></svg></button><button class="rt rt-blue" aria-label="Add column"><svg width="15" height="14" viewBox="0 0 15 14"><path fill="none" stroke="#fff" stroke-width="1.800" d="M8.500 12H1.500V2h11.500v4.500M1 2h12.500M7.300 2v10M12 7.500v5M9.500 10h5"/></svg></button></div>
        <div class="credit"><svg width="11" height="8" viewBox="0 0 12 8"><path fill="#4c7be1" d="M0 0h12v4H0z"/><path fill="#ffd500" d="M0 4h12v4H0z"/></svg><a href="#">Leaflet</a> | © <a href="#">OpenStreetMap</a></div>
        <div class="mark mark-map"></div>
      </div>
    </section>

    <section class="cta"><h2>Get a personal consultation</h2><a class="cta-btn" href="#" aria-label="Contact"></a></section>
  </main>
  <div class="scroll"><i class="up"></i><div class="scroll-thumb"></div><i class="down"></i></div>
  <div class="mark mark-side"></div>
</div>
<div class="bottom"></div>
</body>
</html>
```
FILE: styles.css
```css
* { box-sizing: border-box; }
body { margin: 0; height: 100vh; display: flex; flex-direction: column; overflow: hidden; background: #fff; font-family: "Noto Sans", sans-serif; font-size: 11px; color: #2c2f36; }
button { border: 0; padding: 0; margin: 0; background: none; font: inherit; color: inherit; display: flex; align-items: center; justify-content: center; cursor: pointer; }
input, textarea { font: inherit; margin: 0; }
h1, h2, h3, h4 { margin: 0; }
a { text-decoration: none; }
.defs { display: none; }

.chrome { flex: none; height: 8px; background: #4a5d63; border-bottom: 1px solid #3a4449; padding: 0 107px; }
.chrome-bar { height: 4px; background: #38444c; border-radius: 0 0 6px 6px; }

.topbar { flex: none; height: 45px; display: flex; align-items: stretch; background: #2b3036; color: #d6d6da; }
.logo { width: 43px; background: #1b1e21; display: flex; align-items: center; justify-content: center; }
.tool { width: 45px; }
.tool-on { background: #373d46; }
.topbar .tool:nth-of-type(n+5) { width: 40px; }
.spacer { flex: 1; }
.topbar .spacer ~ .tool { width: 45px; }
.pages { align-self: center; display: flex; height: 32px; margin: 0 16px 0 9px; border: 1px solid #3b4149; border-radius: 4px; overflow: hidden; }
.page { width: 30px; }
.page-on { background: #4b5158; }
.save { width: 123px; background: #228dd7; color: #fff; font-weight: 700; }
.exit { width: 45px; background: #000; }

.workspace { flex: 1; min-height: 0; display: flex; position: relative; }
.sidebar { flex: none; width: 352px; display: flex; flex-direction: column; box-shadow: 0 0 12px rgba(60, 60, 110, .12); position: relative; z-index: 1; background: #fff; }
.tabs { flex: none; display: flex; height: 45px; border-bottom: 1px solid #ececf0; }
.tab { width: 51px; background: #f4f4f9; color: #5d6166; border-right: 1px solid #e9e9ee; }
.tab-main { flex: 1; background: #fff; color: #3a8dcc; font-size: 12px; font-weight: 600; border: 0; }
.head { flex: none; height: 46px; display: flex; align-items: center; padding: 0 26px 0 13px; gap: 17px; }
.head h1 { flex: 1; font-size: 15px; font-weight: 600; }
.modes { flex: none; height: 36px; display: flex; }
.mode { flex: 1; background: #228dd7; color: #fff; font-size: 12px; font-weight: 700; }
.mode-on { background: #1879b8; }
.fields-wrap { flex: 1; min-height: 0; display: flex; }
.fields { flex: 1; overflow: hidden; }
.side-thumb { width: 4px; height: 807px; background: #64676b; }
.field { padding: 15px 17px 20px 15px; border-bottom: 1px solid #fbfbfc; }
.label { display: flex; align-items: center; height: 22px; gap: 9px; margin-bottom: 7px; }
.label label, .label-text { flex: 1; font-size: 12px; font-weight: 600; }
.i-help { width: 11px; height: 11px; color: #dddce2; }
.i-data { width: 11px; height: 13px; color: #dddce2; }
.field input, textarea { display: block; width: 100%; height: 33px; border: 1px solid #f0f0f4; border-radius: 3px; padding: 0 10px; color: #53565c; background: #fff; }
.field textarea { height: 89px; }
.combo { display: flex; gap: 13px; }
.find { flex: none; width: 33px; border: 1px solid #f0f0f4; border-bottom: 2px solid #e6e6ee; border-radius: 3px; color: #222; }
.picker { border: 1px solid #f2f2f6; border-radius: 3px; position: relative; margin-top: -1px; }
.picker-head { background: #f4f4f9; padding: 7px 7px 0 8px; height: 69px; }
.picker-row { display: flex; gap: 6px; }
.searchbox { flex: 1; display: flex; align-items: center; background: #fff; height: 29px; border: 1px solid #ececf0; border-radius: 4px; padding-left: 9px; color: #84868c; }
.field .searchbox input { border: 0; height: 26px; font-size: 12px; background: none; }
.searchbox input::placeholder { color: #909298; }
.add { width: 29px; height: 29px; background: #228dd7; color: #fff; border-radius: 3px; }
.sets { display: flex; align-items: center; height: 33px; gap: 11px; font-weight: 600; color: #9a9ba1; }
.sets .plain { width: 9px; }
.sets .last { margin-left: auto; }
.icons { display: grid; grid-template-columns: repeat(11, 1fr); padding: 4px 9px 3px 5px; color: #5f6369; }
.icons svg { width: 15px; height: 15px; margin: 8px auto; overflow: visible; }
.picker-thumb { position: absolute; right: 0; top: 69px; width: 4px; height: 12px; background: #68696f; }
.ad { font-size: 8px; font-weight: 700; fill: #fff; text-anchor: middle; }
.s2, .s17, .s15, .k2 { fill: none; stroke: currentColor; stroke-width: 2; }
.s17 { stroke-width: 1.7; }
.s15 { stroke-width: 1.5; }
.k2 { stroke: #fff; }
.r90 { transform: rotate(90deg); }
.r180 { transform: rotate(180deg); }
.r270 { transform: rotate(270deg); }

.canvas { flex: 1; min-width: 0; overflow: hidden; font-family: Inter, sans-serif; color: #06374f; }
.offices { padding: 115px 237px 0; }
.canvas h2 { font-size: 38px; line-height: 48px; font-weight: 500; text-align: center; }
.canvas h3 { font-size: 28px; line-height: 40px; font-weight: 500; text-align: center; margin-top: 24px; }
.canvas b { color: #40b873; font-weight: 500; }
.grid { display: grid; grid-template-columns: repeat(4, 1fr); row-gap: 57px; margin-top: 48px; }
.office { padding-left: 16px; height: 68px; }
.office h4 { font-size: 19px; line-height: 30px; font-weight: 500; }
.office a { display: block; font-size: 14px; line-height: 24px; margin-top: 6px; color: #55ba80; }
.map-row { margin-top: 63px; padding: 0 233px 0 236px; border: 2px solid #acd0ee; border-radius: 3px; position: relative; }
.map { height: 248px; position: relative; outline: 2px solid #84b6de; }
.tiles { display: block; width: 100%; height: 100%; font-family: "Noto Sans", sans-serif; }
.row-tools, .map-tools { position: absolute; display: flex; border-radius: 4px; overflow: hidden; }
.row-tools { right: 11px; top: 12px; box-shadow: 0 4px 8px rgba(80, 80, 130, .2); }
.map-tools { left: 0; top: 0; }
.rt { width: 27px; height: 27px; background: #262b30; color: #fff; }
.rt-blue { background: #228dd7; }
.zoom-out { position: absolute; left: 9px; top: 8px; width: 26px; height: 52px; background: #fff; border: 1px solid #b4b4b8; border-radius: 3px; align-items: flex-end; padding-bottom: 11px; }
.zoom-out::after { content: ""; width: 10px; height: 2px; background: #111; }
.credit { position: absolute; right: 0; bottom: 0; height: 16px; padding: 0 5px; background: rgba(255, 255, 255, .85); font: 11px/16px "Liberation Sans", sans-serif; color: #444; white-space: nowrap; }
.credit svg { margin-right: 3px; }
.credit a { color: #2580b0; }

.case { fill: none; stroke-linejoin: round; }
.minor { fill: none; stroke: #fff; stroke-width: 1.3; stroke-linejoin: round; }
.rd { font-size: 9px; fill: #3b3438; paint-order: stroke; stroke: rgba(255, 255, 255, .25); stroke-width: 1px; }
.ex, .purple, .brown, .park, .hood, .shield { font-size: 9px; text-anchor: middle; }
.ex { fill: #c94f68; stroke: #fbe6ea; stroke-width: 2px; paint-order: stroke; font-style: italic; }
.purple { fill: #9a72a6; text-anchor: start; }
.brown { fill: #94664a; }
.park { fill: #4d9468; font-style: italic; }
.hood { fill: #77777e; font-style: italic; }
.big { font-size: 10px; }
.shield { font-size: 10px; fill: #5b2c3a; }
.shield rect { fill: #ecc0cc; stroke: #c98aa0; }
.shield .orange { fill: #f9d3c8; stroke: #dba08f; }
.shield .sand { fill: #f3efcf; stroke: #cfc99c; }
.parking { font-size: 13px; font-weight: 600; fill: #1c86cf; }
.town { font-size: 12px; text-anchor: middle; fill: #333; }

.cta { margin: 112px 237px 0; height: 240px; background: #06374f; border-radius: 20px; padding: 72px 72px 0 68px; display: flex; justify-content: space-between; color: #fff; }
.cta h2 { font-size: 48px; line-height: 58px; white-space: nowrap; }
.cta-btn { width: 192px; height: 54px; border-radius: 12px; background: #40b873; margin-top: 9px; }

.scroll { flex: none; width: 12px; background: #f1f0f3; display: flex; flex-direction: column; align-items: center; padding: 5px 0; }
.scroll-thumb { width: 10px; height: 150px; margin: 711px 0 auto; background: #c1c1c5; }
.up, .down { border: 3px solid transparent; border-top: 0; border-bottom: 4px solid #55565a; }
.down { border-bottom: 0; border-top: 4px solid #55565a; }

.mark { position: absolute; border: 4px solid #ff1e12; border-radius: 4px; pointer-events: none; z-index: 2; }
.mark-side { left: 7px; top: 230px; width: 413px; height: 287px; }
.mark-map { left: calc(50% - 170px); width: 405px; top: -35px; bottom: -49px; }
.bottom { flex: none; height: 2px; background: #3a3d40; }
```
